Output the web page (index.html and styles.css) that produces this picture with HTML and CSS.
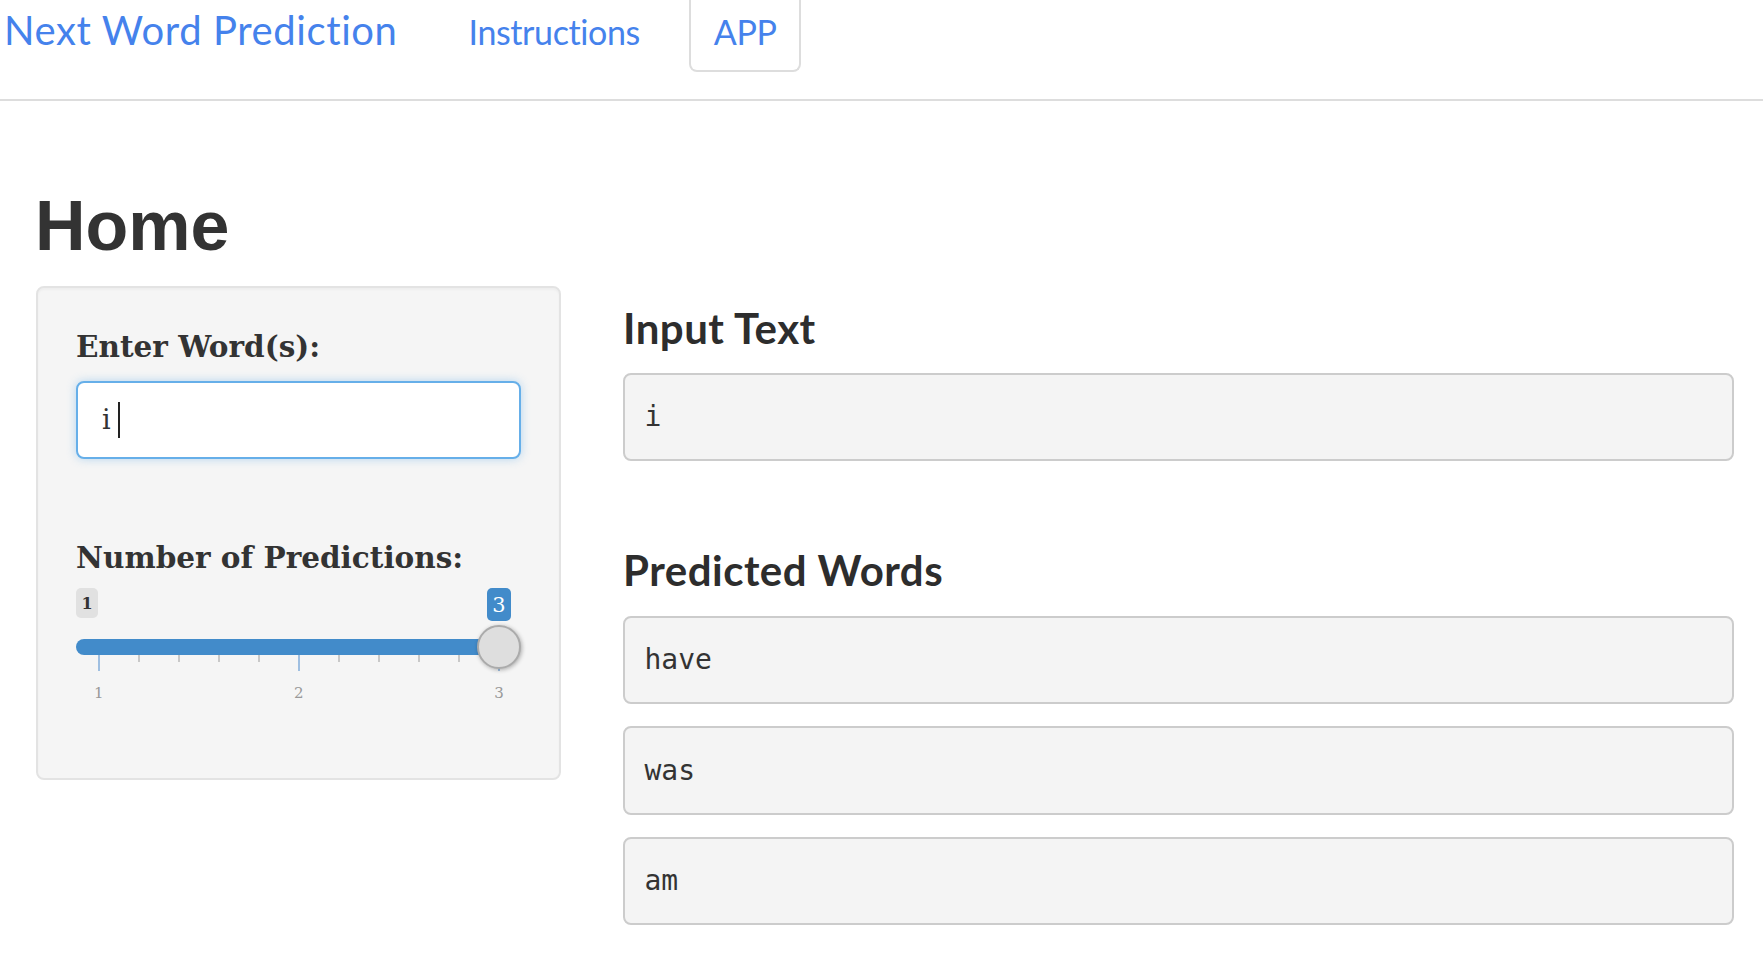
FILE: index.html
```html
<!DOCTYPE html>
<html lang="en">
<head>
<meta charset="utf-8">
<title>Next Word Prediction</title>
<link rel="stylesheet" href="styles.css">
</head>
<body>
<header class="navbar">
  <a class="brand" href="#">Next Word Prediction</a>
  <ul class="nav">
    <li class="nav-item"><a class="nav-link" href="#">Instructions</a></li>
    <li class="nav-item"><a class="nav-link active" href="#">APP</a></li>
  </ul>
</header>
<main class="container">
  <h1 class="page-title">Home</h1>
  <div class="row">
    <aside class="well">
      <label class="field-label">Enter Word(s):</label>
      <div class="text-input"><span class="typed">i</span><span class="caret"></span></div>
      <label class="field-label slider-label">Number of Predictions:</label>
      <div class="slider">
        <div class="slider-badges">
          <span class="badge badge-min">1</span>
          <span class="badge badge-single">3</span>
        </div>
        <div class="slider-track">
          <div class="slider-line"><div class="slider-bar"></div></div>
          <span class="slider-handle"></span>
        </div>
        <div class="slider-ticks">
          <span class="tick major"></span><span class="tick"></span><span class="tick"></span><span class="tick"></span><span class="tick"></span><span class="tick major"></span><span class="tick"></span><span class="tick"></span><span class="tick"></span><span class="tick"></span><span class="tick major"></span>
        </div>
        <div class="slider-labels">
          <span class="grid-label">1</span><span class="grid-label">2</span><span class="grid-label">3</span>
        </div>
      </div>
    </aside>
    <section class="results">
      <h3 class="section-title">Input Text</h3>
      <pre class="output">i</pre>
      <h3 class="section-title predicted">Predicted Words</h3>
      <pre class="output">have</pre>
      <pre class="output">was</pre>
      <pre class="output">am</pre>
    </section>
  </div>
</main>
</body>
</html>
```
FILE: styles.css
```css
* { box-sizing: border-box; }
html, body { margin: 0; padding: 0; background: #fff; }
body { font-family: Lato, "Open Sans", sans-serif; color: #333; }

/* navbar */
.navbar {
  height: 101px;
  border-bottom: 2px solid #dddddd;
  display: flex;
  align-items: flex-start;
  padding-left: 4px;
}
.brand {
  font: 400 40px/50px Lato, sans-serif;
  letter-spacing: 0.6px;
  color: #4582ec;
  text-decoration: none;
  margin-top: 5px;
}
.nav {
  list-style: none;
  display: flex;
  gap: 24px;
  margin: 0 0 0 46px;
  padding: 0;
}
.nav-link {
  display: block;
  font: 400 34px/50px Lato, sans-serif;
  letter-spacing: -0.4px;
  color: #4582ec;
  text-decoration: none;
  padding: 7px 23px 13px;
  border: 2px solid transparent;
  border-top: 0;
  border-radius: 0 0 8px 8px;
}
.nav-link.active { border-color: #dddddd; }

/* page */
.container { padding: 0 29px 0 36px; }
.page-title {
  font: 700 70px/74px "Liberation Sans", Arial, sans-serif;
  color: #333;
  margin: 88px 0 23px -1px;
}
.row { display: flex; align-items: flex-start; gap: 62px; }

/* sidebar well */
.well {
  width: 525px;
  flex: none;
  background: #f5f5f5;
  border: 2px solid #e3e3e3;
  border-radius: 8px;
  box-shadow: inset 0 2px 2px rgba(0,0,0,.03);
  padding: 42px 38px 75px;
}
.field-label {
  display: block;
  font: 700 29.5px/34px "DejaVu Serif", Georgia, serif;
  color: #333;
}
.text-input {
  margin-top: 17px;
  height: 78px;
  background: #fff;
  border: 2px solid #66afe9;
  border-radius: 8px;
  box-shadow: 0 0 10px rgba(102,175,233,.45);
  display: flex;
  align-items: center;
  padding-left: 24px;
  font: 400 27px/36px "DejaVu Serif", Georgia, serif;
  color: #333;
}
.caret {
  display: inline-block;
  width: 2px;
  height: 36px;
  background: #222;
  margin-left: 7px;
}
.slider-label { margin-top: 82px; }

/* slider */
.slider { margin-top: 13px; }
.slider-badges {
  display: flex;
  justify-content: space-between;
  align-items: flex-start;
  padding-right: 10px;
  height: 34px;
}
.badge {
  display: block;
  font-family: "DejaVu Serif", Georgia, serif;
  border-radius: 5px;
  text-align: center;
}
.badge-min {
  width: 22px;
  height: 30px;
  line-height: 31px;
  font-size: 16px;
  font-weight: 700;
  background: #e1e1e1;
  color: #333;
}
.badge-single {
  width: 24px;
  height: 33px;
  line-height: 35px;
  font-size: 21px;
  background: #428bca;
  color: #fff;
}
.slider-track {
  position: relative;
  margin-top: 17px;
  padding-right: 22px;
  height: 16px;
}
.slider-line { height: 16px; }
.slider-bar {
  height: 16px;
  width: 100%;
  background: #428bca;
  border-radius: 8px 0 0 8px;
}
.slider-handle {
  position: absolute;
  right: 0;
  top: -14px;
  width: 44px;
  height: 44px;
  border-radius: 50%;
  background: #dedede;
  border: 2px solid #ababab;
  box-shadow: 1px 1px 4px rgba(0,0,0,.3);
}
.slider-ticks {
  display: flex;
  justify-content: space-between;
  align-items: flex-start;
  margin: 0 21px 0 21.7px;
  height: 16px;
}
.tick { width: 2px; height: 7px; background: #c8c8c8; }
.tick.major { height: 16px; background: #9fbfe1; }
.slider-labels {
  display: flex;
  justify-content: space-between;
  margin: 12px 21px 0 21.7px;
}
.grid-label {
  width: 2px;
  display: flex;
  justify-content: center;
  white-space: nowrap;
  font: 400 15px/20px "DejaVu Serif", Georgia, serif;
  color: #999;
}

/* results */
.results { flex: 1; min-width: 0; }
.section-title {
  font: 700 42px/45px Lato, sans-serif;
  letter-spacing: 0.5px;
  color: #2d2d2d;
  margin: 20px 0 22px;
}
.section-title.predicted { margin-top: 87px; margin-bottom: 23px; }
.output {
  margin: 0 0 22px;
  background: #f4f4f4;
  border: 2px solid #cccccc;
  border-radius: 8px;
  padding: 22.2px 19.5px 22px;
  font: 400 28px/40px "DejaVu Sans Mono", Menlo, monospace;
  color: #333;
}
```
